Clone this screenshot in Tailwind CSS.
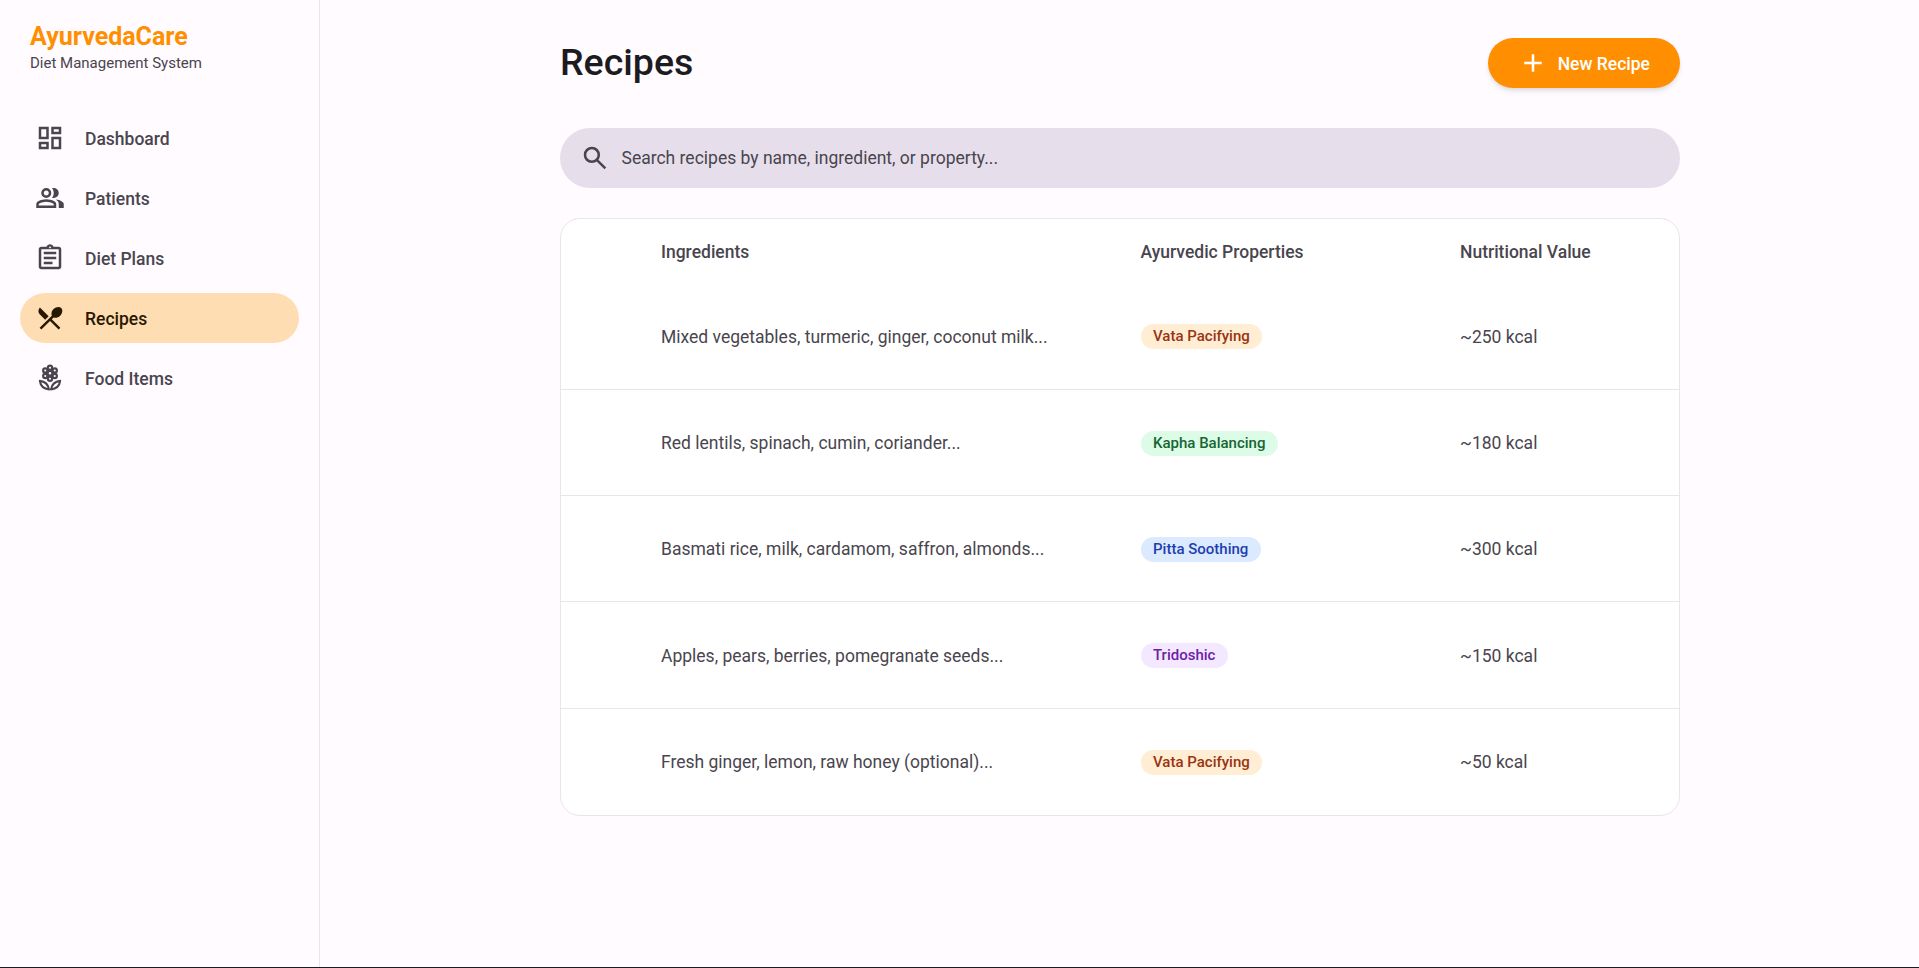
<!DOCTYPE html>
<html lang="en" class="text-[20px]">
<head>
<meta charset="utf-8">
<title>AyurvedaCare</title>
<script src="https://cdn.jsdelivr.net/npm/@tailwindcss/browser@4"></script>
</head>
<body class="flex h-screen overflow-hidden border-b border-[#1c1b1f] bg-[#fffbff] font-[Roboto,sans-serif] text-[#49454e]">
<aside class="w-64 shrink-0 border-r border-gray-200">
  <div class="h-[93px] px-6 pt-[19px]">
    <h1 class="text-xl font-bold text-[#ff8f00]">AyurvedaCare</h1>
    <p class="text-xs">Diet Management System</p>
  </div>
  <nav class="flex flex-col gap-2 px-4 pt-4 text-sm font-medium">
    <a class="flex h-[50px] w-[279px] items-center gap-4 rounded-full px-3">
      <svg class="size-6 shrink-0" viewBox="0 -960 960 960" fill="currentColor"><path d="M520-600v-240h320v240H520ZM120-440v-400h320v400H120Zm400 320v-400h320v400H520Zm-400 0v-240h320v240H120Zm80-400h160v-240H200v240Zm400 320h160v-240H600v240Zm0-480h160v-80H600v80ZM200-200h160v-80H200v80Z"/></svg>
      <span class="pt-0.5">Dashboard</span>
    </a>
    <a class="flex h-[50px] w-[279px] items-center gap-4 rounded-full px-3">
      <svg class="size-6 shrink-0" viewBox="0 -960 960 960" fill="currentColor"><path d="M40-160v-112q0-34 17.500-62.500T104-378q62-31 126-46.500T360-440q66 0 130 15.500T616-378q29 15 46.500 43.500T680-272v112H40Zm720 0v-120q0-44-24.500-84.500T666-434q51 6 96 20.500t84 35.500q36 20 55 44.500t19 53.500v120H760ZM360-480q-66 0-113-47t-47-113q0-66 47-113t113-47q66 0 113 47t47 113q0 66-47 113t-113 47Zm400-160q0 66-47 113t-113 47q-11 0-28-2.500t-28-5.500q27-32 41.500-71t14.500-81q0-42-14.500-81T544-792q14-5 28-6.500t28-1.500q66 0 113 47t47 113ZM120-240h480v-32q0-11-5.500-20T580-306q-54-27-109-40.500T360-360q-56 0-111 13.500T140-306q-9 5-14.500 14t-5.500 20v32Zm240-320q33 0 56.500-23.500T440-640q0-33-23.500-56.500T360-720q-33 0-56.500 23.500T280-640q0 33 23.500 56.500T360-560Z"/></svg>
      <span class="pt-0.5">Patients</span>
    </a>
    <a class="flex h-[50px] w-[279px] items-center gap-4 rounded-full px-3">
      <svg class="size-6 shrink-0" viewBox="0 -960 960 960" fill="currentColor"><path d="M200-120q-33 0-56.500-23.500T120-200v-560q0-33 23.500-56.500T200-840h168q13-36 43.500-58t68.500-22q38 0 68.500 22t43.500 58h168q33 0 56.500 23.500T840-760v560q0 33-23.500 56.500T760-120H200Zm0-80h560v-560H200v560Zm80-80h280v-80H280v80Zm0-160h400v-80H280v80Zm0-160h400v-80H280v80Zm200-190q13 0 21.500-8.500T510-820q0-13-8.500-21.500T480-850q-13 0-21.500 8.500T450-820q0 13 8.500 21.500T480-790Z"/></svg>
      <span class="pt-0.5">Diet Plans</span>
    </a>
    <a class="flex h-[50px] w-[279px] items-center gap-4 rounded-full bg-[#ffddb3] px-3 text-[#291800]">
      <svg class="size-6 shrink-0" viewBox="0 0 24 24" fill="currentColor"><path d="M8.100 13.340l2.830-2.830L3.910 3.500c-1.560 1.560-1.560 4.090 0 5.660l4.190 4.180zm6.780-1.810c1.530.71 3.680.21 5.270-1.380 1.910-1.910 2.280-4.650.81-6.120-1.460-1.460-4.200-1.100-6.120.81-1.590 1.590-2.090 3.740-1.380 5.270L3.700 19.870l1.410 1.410L12 14.410l6.880 6.880 1.410-1.410L13.410 13l1.470-1.470z"/></svg>
      <span class="pt-0.5">Recipes</span>
    </a>
    <a class="flex h-[50px] w-[279px] items-center gap-4 rounded-full px-3">
      <svg class="size-6 shrink-0" viewBox="0 0 24 24" fill="none" stroke="currentColor" stroke-width="1.700" stroke-linejoin="round"><circle cx="12" cy="8.200" r="1.900"/><circle cx="12" cy="3.800" r="1.700"/><circle cx="12" cy="12.600" r="1.700"/><circle cx="8.200" cy="6" r="1.700"/><circle cx="15.800" cy="6" r="1.700"/><circle cx="8.200" cy="10.400" r="1.700"/><circle cx="15.800" cy="10.400" r="1.700"/><path d="M3.900 14.300C7.600 14.700 10.500 17.200 11.200 21.100C7.200 20.700 4.400 18.200 3.900 14.300ZM20.100 14.300C16.400 14.700 13.500 17.200 12.800 21.100C16.800 20.700 19.600 18.200 20.100 14.300Z"/></svg>
      <span class="pt-0.5">Food Items</span>
    </a>
  </nav>
</aside>
<main class="flex-1 pt-[38px]">
  <div class="ml-[240px] w-[1120px]">
    <header class="mb-8 flex h-[50px] items-center justify-between">
      <h2 class="pb-px text-3xl font-medium text-[#1c1b1f]">Recipes</h2>
      <button class="flex h-full items-center gap-2 rounded-full bg-[#ff8f00] px-6 text-sm font-medium text-white shadow-md">
        <svg class="size-6" viewBox="0 -960 960 960" fill="currentColor"><path d="M440-440H200v-80h240v-240h80v240h240v80H520v240h-80v-240Z"/></svg>
        <span class="pt-0.5">New Recipe</span>
      </button>
    </header>
    <div class="mb-6 flex h-[60px] items-center gap-[11.500px] rounded-full bg-[#e6dfeb] px-4 text-sm">
      <svg class="size-6" viewBox="0 -960 960 960" fill="currentColor"><path d="M784-120 532-372q-30 24-69 38t-83 14q-109 0-184.500-75.500T120-580q0-109 75.500-184.500T380-840q109 0 184.500 75.500T640-580q0 44-14 83t-38 69l252 252-56 56ZM380-400q75 0 127.500-52.500T560-580q0-75-52.500-127.500T380-760q-75 0-127.500 52.500T200-580q0 75 52.500 127.500T380-400Z"/></svg>
      <span class="pt-px">Search recipes by name, ingredient, or property...</span>
    </div>
    <div class="overflow-hidden rounded-[20px] border border-gray-200 bg-white text-sm">
      <div class="grid h-[64.500px] grid-cols-[479.500px_319.500px_1fr] items-center pt-[3px] pl-[100px] font-medium">
        <span>Ingredients</span><span>Ayurvedic Properties</span><span>Nutritional Value</span>
      </div>
      <div class="divide-y divide-gray-200">
        <div class="grid h-[106.250px] grid-cols-[479.500px_319.500px_1fr] items-center pt-0.5 pl-[100px]">
          <span>Mixed vegetables, turmeric, ginger, coconut milk...</span>
          <span class="-mt-px justify-self-start rounded-full bg-orange-100 px-[12.500px] pt-[3px] pb-[2px] text-xs font-medium text-[#9a3412]">Vata Pacifying</span>
          <span>~250 kcal</span>
        </div>
        <div class="grid h-[106.250px] grid-cols-[479.500px_319.500px_1fr] items-center pt-0.5 pl-[100px]">
          <span>Red lentils, spinach, cumin, coriander...</span>
          <span class="-mt-px justify-self-start rounded-full bg-[#dcfce7] px-[12.500px] pt-[3px] pb-[2px] text-xs font-medium text-[#166534]">Kapha Balancing</span>
          <span>~180 kcal</span>
        </div>
        <div class="grid h-[106.250px] grid-cols-[479.500px_319.500px_1fr] items-center pt-0.5 pl-[100px]">
          <span>Basmati rice, milk, cardamom, saffron, almonds...</span>
          <span class="-mt-px justify-self-start rounded-full bg-[#dbeafe] px-[12.500px] pt-[3px] pb-[2px] text-xs font-medium text-[#1e40af]">Pitta Soothing</span>
          <span>~300 kcal</span>
        </div>
        <div class="grid h-[106.250px] grid-cols-[479.500px_319.500px_1fr] items-center pt-0.5 pl-[100px]">
          <span>Apples, pears, berries, pomegranate seeds...</span>
          <span class="-mt-px justify-self-start rounded-full bg-[#f3e8ff] px-[12.500px] pt-[3px] pb-[2px] text-xs font-medium text-[#6b21a8]">Tridoshic</span>
          <span>~150 kcal</span>
        </div>
        <div class="grid h-[106.250px] grid-cols-[479.500px_319.500px_1fr] items-center pt-0.5 pl-[100px]">
          <span>Fresh ginger, lemon, raw honey (optional)...</span>
          <span class="-mt-px justify-self-start rounded-full bg-orange-100 px-[12.500px] pt-[3px] pb-[2px] text-xs font-medium text-[#9a3412]">Vata Pacifying</span>
          <span>~50 kcal</span>
        </div>
      </div>
    </div>
  </div>
</main>
</body>
</html>
